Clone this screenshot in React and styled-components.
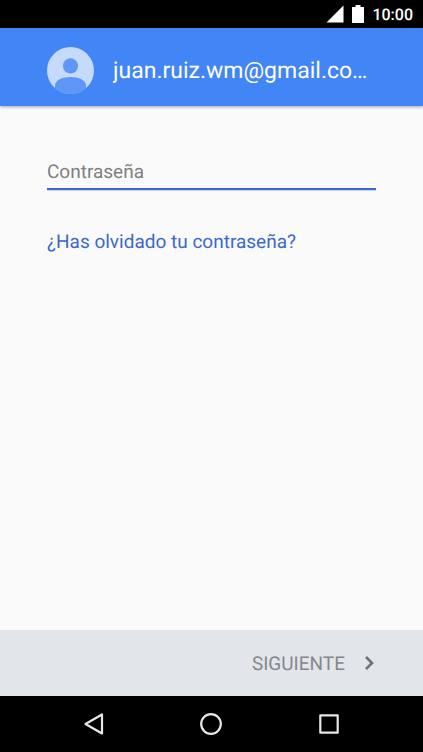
import React, { useState } from 'react'
import styled, { createGlobalStyle } from 'styled-components'


const GlobalStyle = createGlobalStyle`
    * {
        box-sizing: border-box;
    }
    body {
        margin: 0;
        background: #fafafa;
        font-family: Roboto, "Liberation Sans", sans-serif;
        text-rendering: geometricPrecision;
    }
`
const Screen = styled.div`
    min-height: 100vh;
    display: flex;
    flex-direction: column;
    background: #fafafa;
`
const StatusBar = styled.div`
    height: 28px;
    padding: 0 10px;
    display: flex;
    align-items: center;
    justify-content: flex-end;
    gap: 8px;
    background: #000;
    color: #fff;
`
const Clock = styled.time`
    padding-top: 2px;
    font-size: 16px;
    font-weight: 500;
    line-height: 20px;
`
const Header = styled.header`
    height: 78px;
    padding: 6px 47px 0;
    display: flex;
    align-items: center;
    gap: 19px;
    background: #4285f4;
    box-shadow: 0 1px 3px rgba(0, 0, 0, 0.35);
`
const Avatar = styled.svg`
    width: 47px;
    height: 47px;
    flex-shrink: 0;
`
const Email = styled.h1`
    margin: 0;
    padding-top: 2px;
    min-width: 0;
    overflow: hidden;
    text-overflow: ellipsis;
    white-space: nowrap;
    color: #fff;
    font-size: 23px;
    font-weight: 400;
    line-height: 32px;
`
const Form = styled.form`
    flex: 1;
    display: flex;
    flex-direction: column;
`
const Fields = styled.main`
    flex: 1;
    padding: 52px 47px;
    display: flex;
    flex-direction: column;
    align-items: flex-start;
    gap: 40px;
`
const PasswordInput = styled.input`
    width: 100%;
    height: 32px;
    padding: 0 0 4px;
    border: 0;
    border-bottom: 2px solid #3c68cc;
    border-radius: 0;
    outline: 0;
    background: transparent;
    box-shadow: 0 1px 0 #c9d6f2;
    color: #212121;
    font-family: inherit;
    font-size: 19px;
    text-rendering: inherit;

    &::placeholder {
        color: #808080;
        opacity: 1;
    }
`
const ForgotLink = styled.a`
    color: #3c68cc;
    font-size: 19px;
    line-height: 24px;
    text-decoration: none;
`
const Footer = styled.footer`
    height: 66px;
    padding: 0 47px;
    display: flex;
    justify-content: flex-end;
    background: #e2e6ea;
`
const NextButton = styled.button`
    padding: 0;
    display: flex;
    align-items: center;
    gap: 18px;
    border: 0;
    background: transparent;
    color: #858789;
    font-family: inherit;
    font-size: 19px;
    line-height: 24px;
    text-rendering: inherit;
    cursor: pointer;
`
const NextLabel = styled.span`
    padding-top: 2px;
`
const NavBar = styled.nav`
    height: 56px;
    padding: 0 35px;
    display: grid;
    grid-template-columns: repeat(3, 1fr);
    background: #000;
`
const NavButton = styled.button`
    padding: 0;
    display: flex;
    align-items: center;
    justify-content: center;
    border: 0;
    background: transparent;
    color: #e8e8e8;
    cursor: pointer;
`


const App = () => {

    const [password,setPassword] = useState('');

    return (
        <Screen>
            <GlobalStyle />

            <StatusBar>
                <svg width="18" height="18" viewBox="0 0 18 18" aria-hidden="true">
                    <path d="M17.5 0.5V17.5H0.5Z" fill="#fff" />
                </svg>
                <svg width="12" height="18" viewBox="0 0 12 18" aria-hidden="true">
                    <path d="M3.5 0h5v2H12v16H0V2h3.5z" fill="#fff" />
                </svg>
                <Clock>10:00</Clock>
            </StatusBar>

            <Header>
                <Avatar viewBox="0 0 47 47" aria-hidden="true">
                    <circle cx="23.5" cy="23.5" r="23.5" fill="#c6dafb" />
                    <circle cx="23.5" cy="18.8" r="7.6" fill="#5e97f6" />
                    <path d="M8 41.2V38.5C8 33.2 15 30 23.5 30S39 33.2 39 38.5v2.7A23.5 23.5 0 0 1 8 41.2z" fill="#5e97f6" />
                </Avatar>
                <Email>juan.ruiz.wm@gmail.co…</Email>
            </Header>

            <Form onSubmit={(e) => e.preventDefault()}>
                <Fields>
                    <PasswordInput
                        type="password"
                        placeholder="Contraseña"
                        aria-label="Contraseña"
                        value={password}
                        onChange={(e) => setPassword(e.target.value)}
                    />
                    <ForgotLink href="#recuperar">¿Has olvidado tu contraseña?</ForgotLink>
                </Fields>

                <Footer>
                    <NextButton type="submit">
                        <NextLabel>SIGUIENTE</NextLabel>
                        <svg width="13" height="16" viewBox="0 0 13 16" aria-hidden="true">
                            <path d="M3 2l6 6-6 6" fill="none" stroke="#707274" strokeWidth="2.6" />
                        </svg>
                    </NextButton>
                </Footer>
            </Form>

            <NavBar>
                <NavButton type="button" aria-label="Atrás">
                    <svg width="22" height="24" viewBox="0 0 22 24" fill="none" stroke="currentColor" strokeWidth="2.2" strokeLinejoin="round">
                        <path d="M19 2.5v19L2.5 12z" />
                    </svg>
                </NavButton>
                <NavButton type="button" aria-label="Inicio">
                    <svg width="24" height="24" viewBox="0 0 24 24" fill="none" stroke="currentColor" strokeWidth="2.2">
                        <circle cx="12" cy="12" r="9.8" />
                    </svg>
                </NavButton>
                <NavButton type="button" aria-label="Recientes">
                    <svg width="20" height="20" viewBox="0 0 20 20" fill="none" stroke="currentColor" strokeWidth="2.2" strokeLinejoin="round">
                        <rect x="1.3" y="1.3" width="17.4" height="17.4" />
                    </svg>
                </NavButton>
            </NavBar>
        </Screen>
    )
}

export default App;
